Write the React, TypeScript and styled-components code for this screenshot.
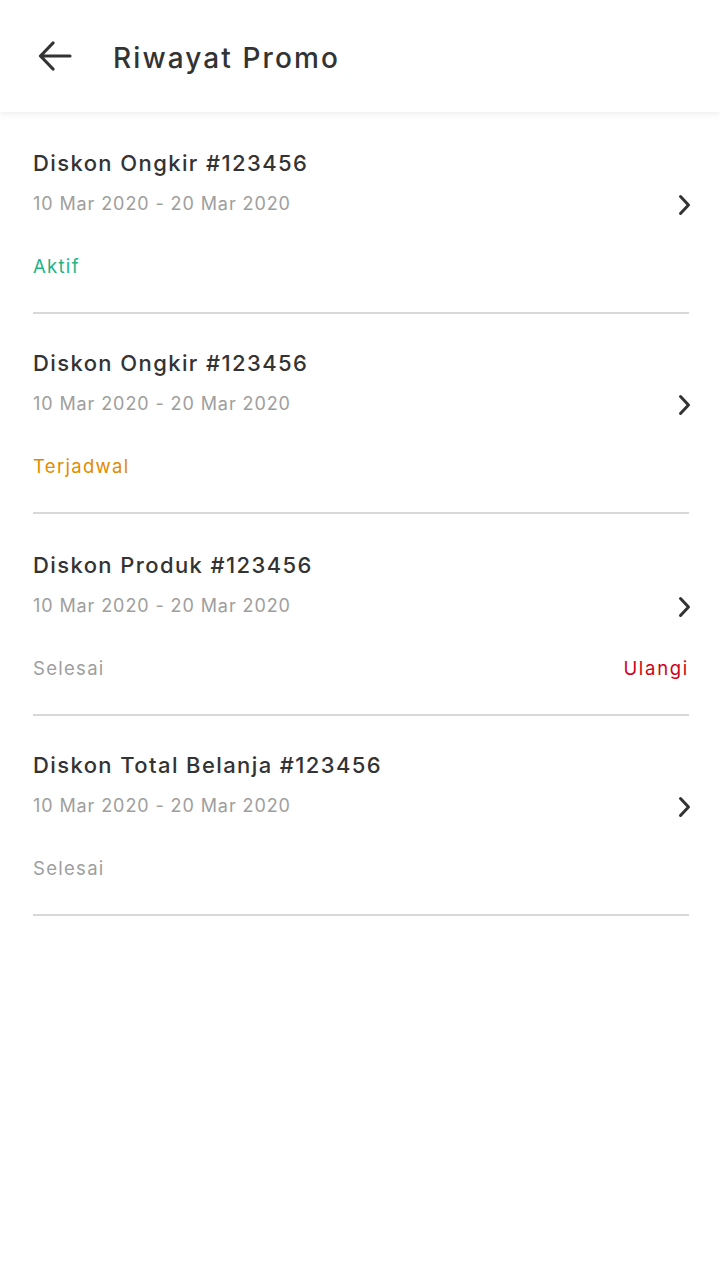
import styled, { createGlobalStyle } from 'styled-components';

type Status = 'aktif' | 'terjadwal' | 'selesai';

interface Promo {
  title: string;
  period: string;
  status: Status;
  retry?: boolean;
}

const promos: Promo[] = [
  { title: 'Diskon Ongkir #123456', period: '10 Mar 2020 - 20 Mar 2020', status: 'aktif' },
  { title: 'Diskon Ongkir #123456', period: '10 Mar 2020 - 20 Mar 2020', status: 'terjadwal' },
  { title: 'Diskon Produk #123456', period: '10 Mar 2020 - 20 Mar 2020', status: 'selesai', retry: true },
  { title: 'Diskon Total Belanja #123456', period: '10 Mar 2020 - 20 Mar 2020', status: 'selesai' },
];

const statusLabel: Record<Status, string> = {
  aktif: 'Aktif',
  terjadwal: 'Terjadwal',
  selesai: 'Selesai',
};

function App() {
  return (
    <>
      <GlobalStyle />
      <Page>
        <Header>
          <BackButton aria-label="Kembali">
            <svg width="34" height="30" viewBox="0 0 34 30" fill="none">
              <path
                d="M32 15H3M15 2L2.5 15L15 28"
                stroke="#333"
                strokeWidth="3.2"
                strokeLinecap="round"
                strokeLinejoin="round"
              />
            </svg>
          </BackButton>
          <HeaderTitle>Riwayat Promo</HeaderTitle>
        </Header>

        <List>
          {promos.map((promo, i) => (
            <Item key={i} $retry={!!promo.retry}>
              <ItemTitle>{promo.title}</ItemTitle>
              <DateRow>
                <Period>{promo.period}</Period>
                <Chevron width="13" height="22" viewBox="0 0 13 22" fill="none">
                  <path
                    d="M2.5 2.5L10.5 11L2.5 19.5"
                    stroke="#333"
                    strokeWidth="3"
                    strokeLinecap="round"
                    strokeLinejoin="round"
                  />
                </Chevron>
              </DateRow>
              <StatusRow>
                <StatusText $status={promo.status}>{statusLabel[promo.status]}</StatusText>
                {promo.retry && <RetryLink>Ulangi</RetryLink>}
              </StatusRow>
            </Item>
          ))}
        </List>
      </Page>
    </>
  );
}

//Styling
const GlobalStyle = createGlobalStyle`
  html, body {
    margin: 0;
    padding: 0;
    background: #ffffff;
  }
  body {
    font-family: Inter, "Open Sans", sans-serif;
    -webkit-font-smoothing: antialiased;
  }
`;

const Page = styled.div`
  width: 720px;
  min-height: 1280px;
  background: #ffffff;
`;

const Header = styled.header`
  height: 112px;
  display: flex;
  align-items: center;
  padding-left: 38px;
  box-sizing: border-box;
  box-shadow: 0 2px 6px rgba(0, 0, 0, 0.07);
  position: relative;
`;

const BackButton = styled.button`
  border: none;
  background: none;
  padding: 0;
  display: flex;
  align-items: center;
  margin-right: 41px;
  cursor: pointer;
`;

const HeaderTitle = styled.h1`
  margin: 3px 0 0;
  font-size: 28px;
  font-weight: 500;
  color: #333333;
  letter-spacing: 2.1px;
`;

const List = styled.main`
  padding: 2px 31px 0 33px;
`;

const Item = styled.section<{ $retry: boolean }>`
  padding: ${(p) => (p.$retry ? '36px 0 34px' : '34px 0 34px')};
  border-bottom: 2px solid #d8d8d8;
  display: flex;
  flex-direction: column;
`;

const ItemTitle = styled.h2`
  margin: 0;
  font-size: 22px;
  line-height: 30px;
  font-weight: 500;
  color: #333333;
  letter-spacing: 1.4px;
`;

const DateRow = styled.div`
  margin-top: 13px;
  height: 26px;
  display: flex;
  align-items: center;
  justify-content: space-between;
`;

const Period = styled.span`
  font-size: 18px;
  line-height: 26px;
  color: #9e9e9e;
  letter-spacing: 0.9px;
`;

const Chevron = styled.svg`
  margin-top: 2px;
  margin-right: -2px;
`;

const statusColor: Record<Status, string> = {
  aktif: '#1db487',
  terjadwal: '#e38b00',
  selesai: '#9e9e9e',
};

const StatusRow = styled.div`
  margin-top: 36px;
  margin-bottom: -1px;
  display: flex;
  justify-content: space-between;
  align-items: center;
`;

const StatusText = styled.span<{ $status: Status }>`
  font-size: 18.5px;
  line-height: 26px;
  color: ${(p) => statusColor[p.$status]};
  letter-spacing: 1.3px;
`;

const RetryLink = styled.span`
  font-size: 18.5px;
  line-height: 26px;
  color: #d0011b;
  letter-spacing: 1.7px;
`;

export default App;
